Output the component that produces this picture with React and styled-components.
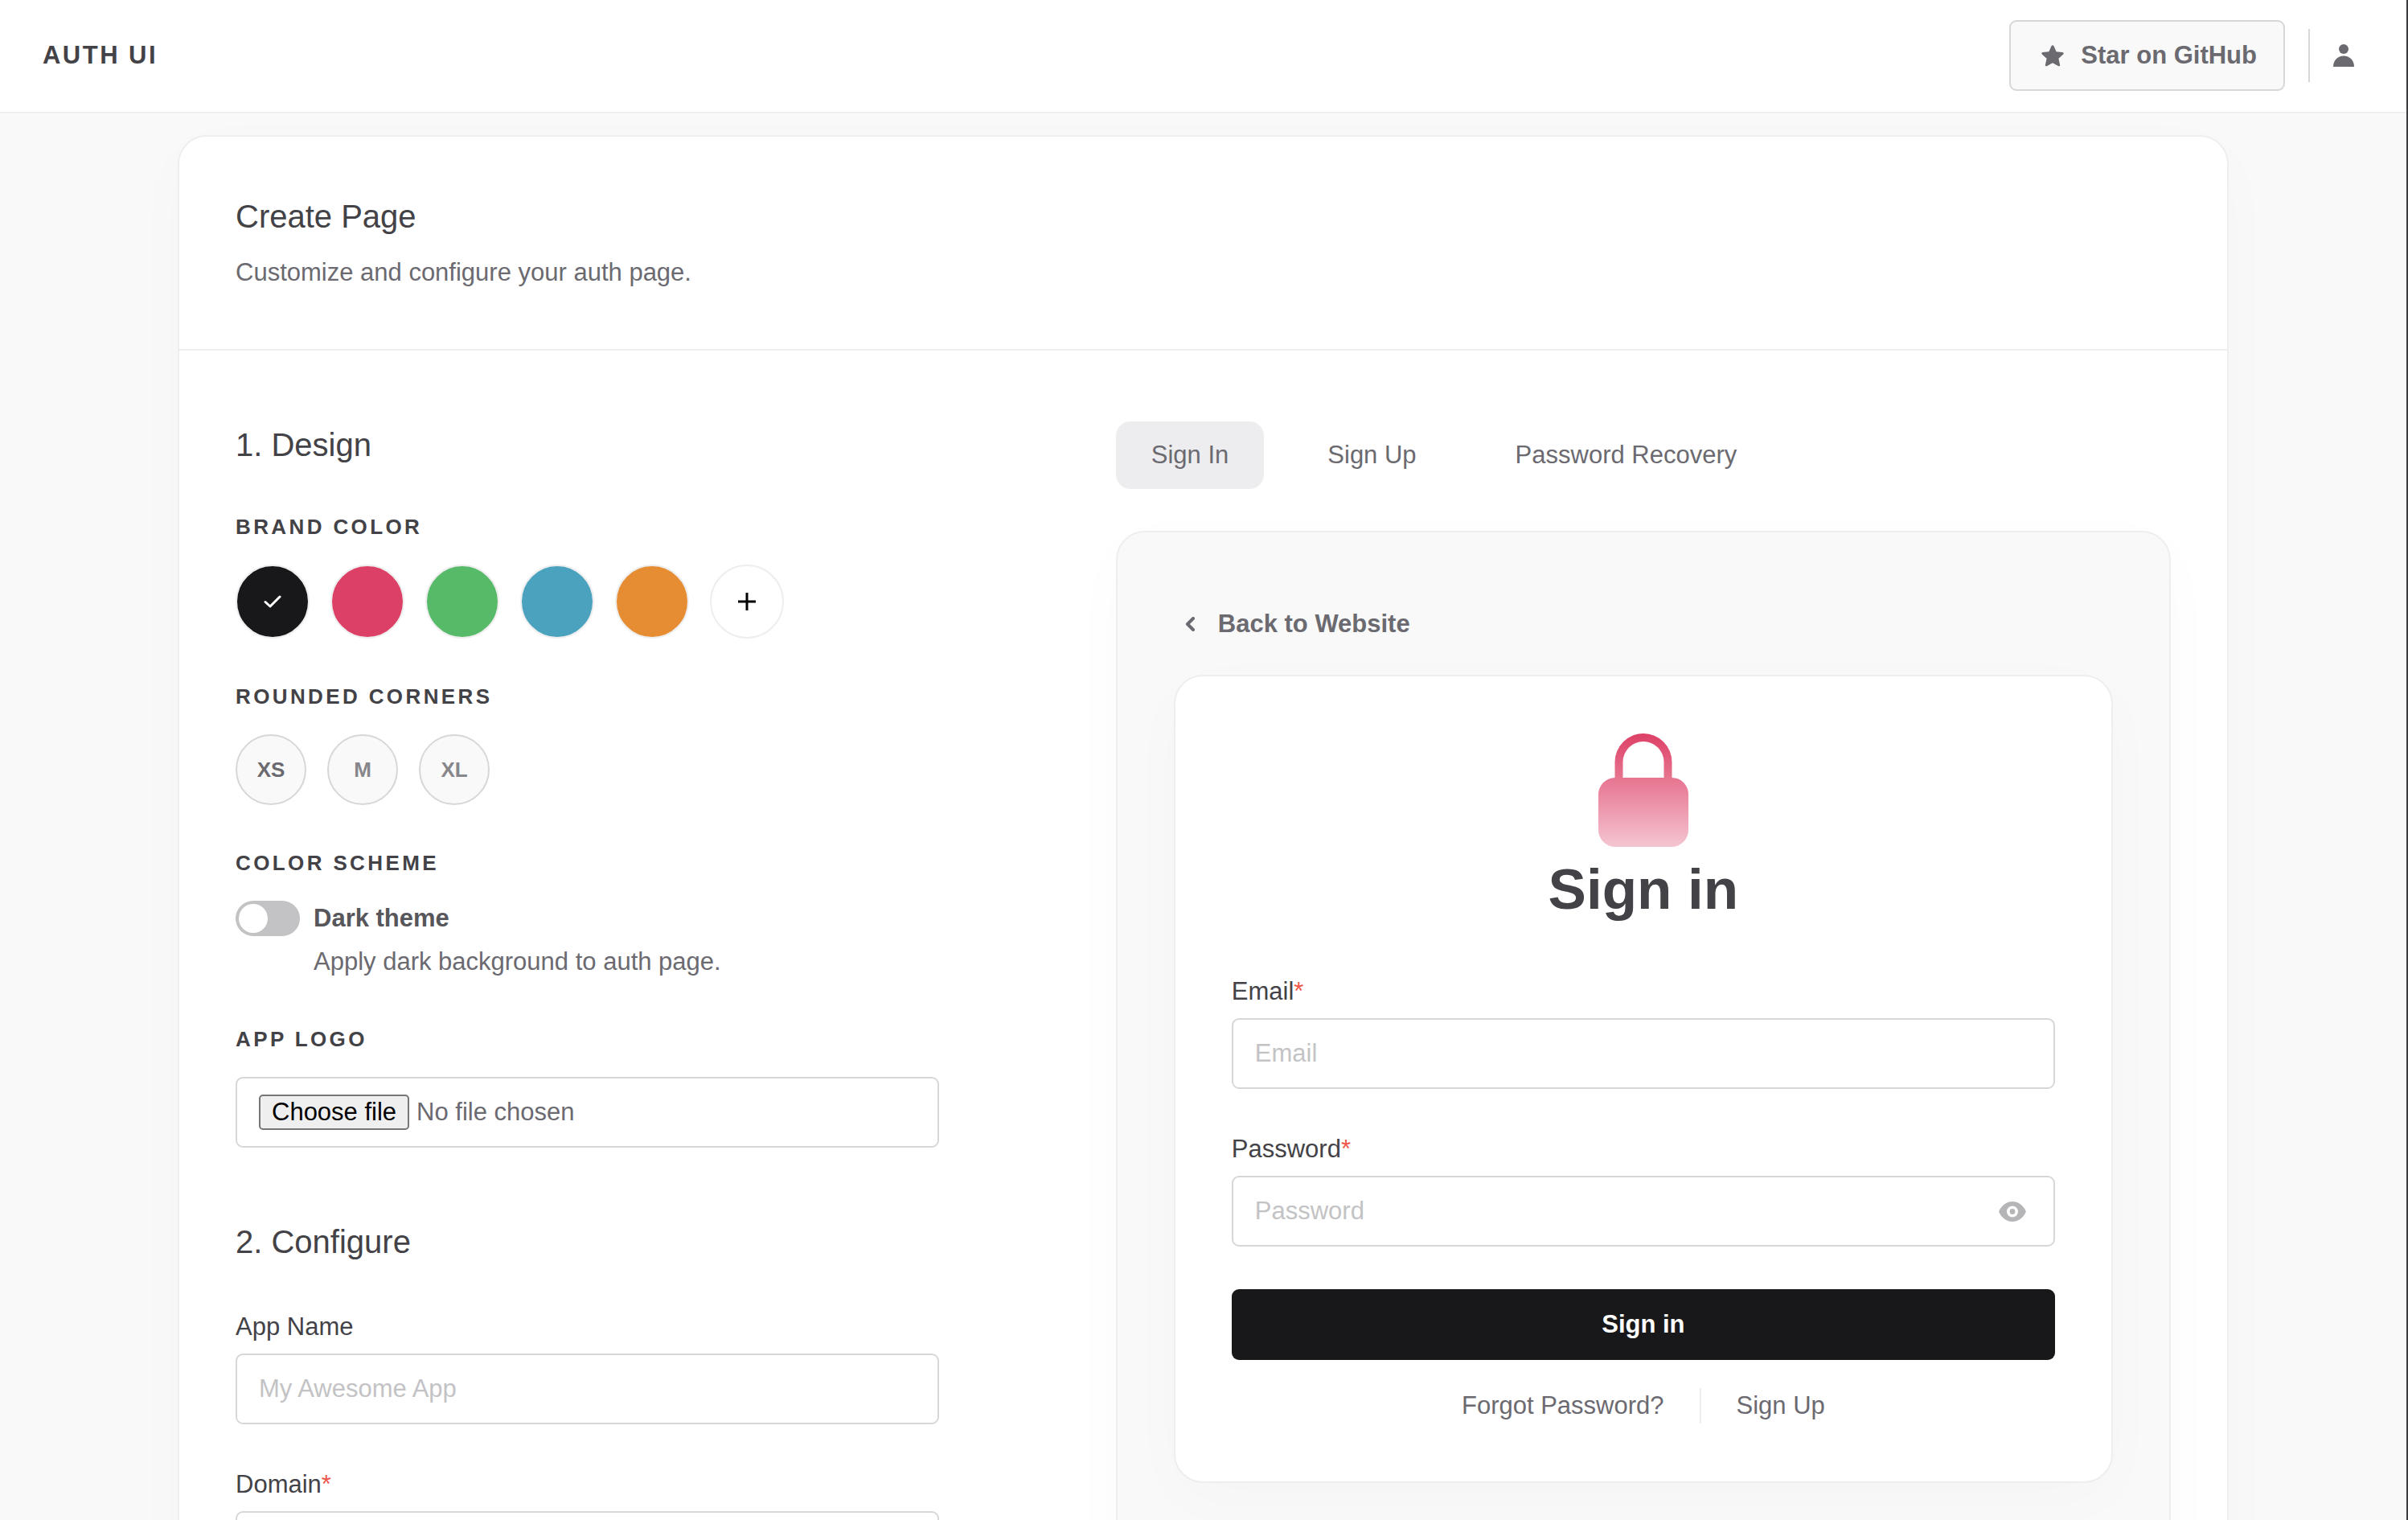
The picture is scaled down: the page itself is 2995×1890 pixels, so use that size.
import React, { useState } from "react";
import styled, { createGlobalStyle } from "styled-components";

const ink = "#434247";
const muted = "#6b6a70";
const hair = "#eeeeee";
const line = "#d7d7d8";

const GlobalStyle = createGlobalStyle`
  *, *::before, *::after { box-sizing: border-box; }
  html { border-right: 2px solid #3b3b3d; scrollbar-width: none; }
  body {
    margin: 0;
    background: #f9f9f9;
    color: ${muted};
    font-family: "Liberation Sans", Arial, Helvetica, sans-serif;
    font-size: 31px;
    line-height: 44px;
  }
  button, input { font: inherit; }
  a { color: inherit; text-decoration: none; }
  h1, h2, h3, p, fieldset { margin: 0; padding: 0; border: 0; font-weight: 400; }
  svg { display: block; }
`;

const Header = styled.header`
  position: relative;
  z-index: 1;
  display: flex;
  align-items: center;
  justify-content: space-between;
  padding: 25px 65px 26px 53px;
  border-bottom: 2px solid ${hair};
  background: #fff;
`;

const Brand = styled.a`
  color: ${ink};
  font-weight: 700;
  letter-spacing: 0.08em;
`;

const HeaderActions = styled.div`
  display: flex;
  align-items: center;
`;

const StarButton = styled.button`
  display: flex;
  align-items: center;
  gap: 21px;
  height: 88px;
  padding: 0 33px 0 38px;
  border: 2px solid ${line};
  border-radius: 9px;
  background: #f9f9f9;
  color: ${muted};
  font-weight: 700;
`;

const HeaderRule = styled.span`
  width: 2px;
  height: 66px;
  margin: 0 29px;
  background: ${line};
`;

const IconButton = styled.button`
  display: flex;
  padding: 0;
  border: 0;
  background: none;
  color: ${({ $tone }) => $tone || muted};
`;

const Main = styled.main`
  padding: 27px 221px 70px;
`;

const Card = styled.section`
  border: 2px solid ${hair};
  border-radius: 36px;
  background: ${({ $fill }) => $fill || "#fff"};
  box-shadow: 0 20px 80px rgba(0, 0, 0, 0.02);
`;

const CardHead = styled.header`
  padding: 75px 70px 73px;
  border-bottom: 2px solid ${hair};
`;

const Title = styled.h1`
  margin-bottom: 24px;
  color: ${ink};
  font-size: 40px;
  line-height: 48px;
`;

const Columns = styled.div`
  display: grid;
  grid-template-columns: 2fr 3fr;
  gap: 220px;
  padding: 88px 70px;
`;

const StepTitle = styled.h2`
  margin-bottom: ${({ $space }) => $space}px;
  padding-top: 5px;
  color: ${ink};
  font-size: 40px;
  line-height: 48px;
`;

const Group = styled.fieldset`
  min-width: 0;
  margin-bottom: ${({ $space }) => $space || 50}px;
`;

const Caption = styled.legend`
  padding: 0;
  margin-bottom: 25px;
  color: ${ink};
  font-size: 26px;
  font-weight: 700;
  line-height: 44px;
  letter-spacing: 0.13em;
  text-transform: uppercase;
`;

const Options = styled.div`
  display: flex;
  gap: 26px;
`;

const Swatch = styled.button`
  display: grid;
  place-items: center;
  width: 92px;
  height: 92px;
  padding: 0;
  border: 2px solid ${hair};
  border-radius: 50%;
  background: ${({ $color }) => $color};
  color: ${({ $mark }) => $mark};
`;

const SizeButton = styled.button`
  width: 88px;
  height: 88px;
  padding: 0;
  border: 2px solid ${line};
  border-radius: 50%;
  background: #f9f9f9;
  color: ${({ $active }) => ($active ? muted : "#87868b")};
  font-size: 26px;
  font-weight: 700;
`;

const SwitchRow = styled.label`
  display: grid;
  grid-template-columns: 80px 1fr;
  align-items: center;
  column-gap: 17px;
  row-gap: 10px;
`;

const Switch = styled.input`
  appearance: none;
  display: flex;
  width: 80px;
  height: 44px;
  margin: 0;
  padding: 4px;
  border-radius: 22px;
  background: #c3c3c5;

  &::before {
    content: "";
    width: 36px;
    height: 36px;
    border-radius: 50%;
    background: #fff;
  }

  &:checked { justify-content: flex-end; background: #18181a; }
`;

const SwitchName = styled.span`
  color: #57565b;
  font-weight: 700;
`;

const SwitchHint = styled.span`
  grid-column: 2;
`;

const FileBox = styled.label`
  position: relative;
  display: flex;
  align-items: center;
  gap: 9px;
  height: 88px;
  padding: 0 27px;
  border: 2px solid ${line};
  border-radius: 9px;
`;

const FileInput = styled.input`
  position: absolute;
  inset: 0;
  width: 100%;
  opacity: 0;
`;

const FileButton = styled.span`
  height: 44px;
  padding: 0 14px;
  border: 2px solid #767676;
  border-radius: 5px;
  background: #efefef;
  color: #000;
  line-height: 40px;
`;

const Field = styled.div`
  margin-bottom: 53px;
`;

const FieldLabel = styled.label`
  display: block;
  margin-bottom: 11px;
  color: ${ink};
`;

const Required = styled.span`
  color: #f0554a;
`;

const InputShell = styled.div`
  display: flex;
  align-items: center;
  height: 88px;
  padding: 0 34px 0 27px;
  border: 2px solid ${line};
  border-radius: 9px;
  background: #fff;
`;

const TextInput = styled.input`
  flex: 1;
  min-width: 0;
  padding: 0;
  border: 0;
  outline: 0;
  background: none;
  color: ${ink};

  &::placeholder { color: #c3c3c5; opacity: 1; }
`;

const Tabs = styled.div`
  display: flex;
  gap: 35px;
  margin-bottom: 52px;
`;

const Tab = styled.button`
  padding: 20px 44px;
  border: 0;
  border-radius: 18px;
  background: ${({ $active }) => ($active ? "#ededef" : "none")};
  color: ${muted};
`;

const Preview = styled(Card)`
  padding: 91px 70px 120px;
`;

const BackLink = styled.a`
  display: inline-flex;
  align-items: center;
  gap: 29px;
  margin-bottom: 41px;
  padding-left: 14px;
  font-weight: 700;
`;

const SignInCard = styled(Card)`
  display: flex;
  flex-direction: column;
  padding: 71px 70px 72px;
`;

const LockArt = styled.svg`
  align-self: center;
`;

const SignInTitle = styled.h2`
  margin: 9px 0 61px;
  color: ${ink};
  font-size: 71px;
  font-weight: 700;
  line-height: 88px;
  text-align: center;
`;

const SubmitButton = styled.button`
  height: 88px;
  margin-bottom: 35px;
  border: 0;
  border-radius: 9px;
  background: #18181a;
  color: #fff;
  font-weight: 700;
`;

const Links = styled.nav`
  display: flex;
  justify-content: center;

  a + a {
    margin-left: 44px;
    padding-left: 44px;
    border-left: 2px solid ${hair};
  }
`;

const StarIcon = () => (
  <svg width="28" height="27" viewBox="0 0 28 27" fill="currentColor" aria-hidden="true">
    <path d="M12.6 1c.5-1.100 2.300-1.100 2.800 0l3.200 7.200 7.800.8c1.300.1 1.800 1.600.8 2.500l-5.800 5.300 1.700 7.800c.3 1.200-1.100 2.100-2.200 1.500L14 22.200l-6.900 3.900c-1.100.6-2.500-.3-2.200-1.500l1.700-7.800L.8 11.500C-.2 10.600.3 9.100 1.600 9l7.800-.8z" />
  </svg>
);

const UserIcon = () => (
  <svg width="26" height="28" viewBox="0 0 26 28" fill="currentColor" aria-hidden="true">
    <circle cx="13" cy="6" r="6" />
    <path d="M0 28C0 20 5.5 14.500 13 14.500S26 20 26 28z" />
  </svg>
);

const CheckIcon = () => (
  <svg width="22" height="16" viewBox="0 0 22 16" fill="none" stroke="currentColor" strokeWidth="3" strokeLinecap="round" strokeLinejoin="round" aria-hidden="true">
    <path d="M2 8.500 8 14 20 2" />
  </svg>
);

const PlusIcon = () => (
  <svg width="22" height="22" viewBox="0 0 22 22" fill="none" stroke="currentColor" strokeWidth="3" aria-hidden="true">
    <path d="M11 0V22M0 11H22" />
  </svg>
);

const ChevronIcon = () => (
  <svg width="12" height="18" viewBox="0 0 12 18" fill="none" stroke="currentColor" strokeWidth="4" strokeLinecap="round" strokeLinejoin="round" aria-hidden="true">
    <path d="M10 2 3 9 10 16" />
  </svg>
);

const EyeIcon = () => (
  <svg width="34" height="25" viewBox="0 0 34 25" fill="currentColor" aria-hidden="true">
    <path fillRule="evenodd" d="M17 0C10 0 4 4.500.6 11.300a2.600 2.600 0 0 0 0 2.400C4 20.500 10 25 17 25s13-4.500 16.400-11.300a2.600 2.600 0 0 0 0-2.400C30 4.500 24 0 17 0zm0 5.500a7 7 0 1 1 0 14 7 7 0 0 1 0-14z" />
    <circle cx="17" cy="12.500" r="3.400" />
  </svg>
);

const Lock = () => (
  <LockArt width="112" height="141" viewBox="0 0 112 141" aria-hidden="true">
    <defs>
      <linearGradient id="lockFill" x1="0" y1="0" x2="0" y2="141" gradientUnits="userSpaceOnUse">
        <stop offset="0" stopColor="#dd4066" />
        <stop offset="1" stopColor="#f5c5d1" />
      </linearGradient>
    </defs>
    <path
      fill="url(#lockFill)"
      fillRule="evenodd"
      d="M20.500 55V35.500a35.500 35.500 0 0 1 71 0V55A20.500 20.500 0 0 1 112 76v44a21 21 0 0 1-21 21H21a21 21 0 0 1-21-21V76A21 21 0 0 1 20.500 55ZM30.500 55h51V35.500a25.500 25.500 0 0 0-51 0Z"
    />
  </LockArt>
);

const colors = [
  { name: "Black", value: "#18181a" },
  { name: "Red", value: "#dd4066" },
  { name: "Green", value: "#56ba68" },
  { name: "Blue", value: "#4aa2bf" },
  { name: "Orange", value: "#e68d33" },
];

function TextField({ id, label, required, children, ...input }) {
  return (
    <Field>
      <FieldLabel htmlFor={id}>
        {label}
        {required && <Required>*</Required>}
      </FieldLabel>
      <InputShell>
        <TextInput id={id} {...input} />
        {children}
      </InputShell>
    </Field>
  );
}

export default function App() {
  const [color, setColor] = useState("Black");
  const [tab, setTab] = useState("Sign In");
  const [radius, setRadius] = useState("XS");

  return (
    <>
      <GlobalStyle />
      <Header>
        <Brand href="#">AUTH UI</Brand>
        <HeaderActions>
          <StarButton type="button">
            <StarIcon />
            Star on GitHub
          </StarButton>
          <HeaderRule />
          <IconButton type="button" aria-label="Account">
            <UserIcon />
          </IconButton>
        </HeaderActions>
      </Header>

      <Main>
        <Card>
          <CardHead>
            <Title>Create Page</Title>
            <p>Customize and configure your auth page.</p>
          </CardHead>

          <Columns>
            <div>
              <StepTitle $space={56}>1. Design</StepTitle>

              <Group>
                <Caption>Brand color</Caption>
                <Options>
                  {colors.map(({ name, value }) => (
                    <Swatch key={name} type="button" aria-label={name} $color={value} $mark="#fff" onClick={() => setColor(name)}>
                      {color === name && <CheckIcon />}
                    </Swatch>
                  ))}
                  <Swatch type="button" aria-label="Add color" $color="#fff" $mark="#000">
                    <PlusIcon />
                  </Swatch>
                </Options>
              </Group>

              <Group>
                <Caption>Rounded corners</Caption>
                <Options>
                  {["XS", "M", "XL"].map((size) => (
                    <SizeButton key={size} type="button" $active={radius === size} onClick={() => setRadius(size)}>
                      {size}
                    </SizeButton>
                  ))}
                </Options>
              </Group>

              <Group $space={52}>
                <Caption>Color scheme</Caption>
                <SwitchRow>
                  <Switch type="checkbox" role="switch" />
                  <SwitchName>Dark theme</SwitchName>
                  <SwitchHint>Apply dark background to auth page.</SwitchHint>
                </SwitchRow>
              </Group>

              <Group $space={88}>
                <Caption>App logo</Caption>
                <FileBox>
                  <FileInput type="file" />
                  <FileButton>Choose file</FileButton>
                  No file chosen
                </FileBox>
              </Group>

              <StepTitle $space={60}>2. Configure</StepTitle>
              <TextField id="app-name" label="App Name" placeholder="My Awesome App" />
              <TextField id="domain" label="Domain" required />
            </div>

            <div>
              <Tabs>
                {["Sign In", "Sign Up", "Password Recovery"].map((name) => (
                  <Tab key={name} type="button" $active={tab === name} onClick={() => setTab(name)}>
                    {name}
                  </Tab>
                ))}
              </Tabs>

              <Preview $fill="#f9f9f9">
                <BackLink href="#">
                  <ChevronIcon />
                  Back to Website
                </BackLink>

                <SignInCard>
                  <Lock />
                  <SignInTitle>Sign in</SignInTitle>
                  <TextField id="email" type="email" label="Email" required placeholder="Email" />
                  <TextField id="password" type="password" label="Password" required placeholder="Password">
                    <IconButton type="button" aria-label="Show password" $tone="#b5b4b7">
                      <EyeIcon />
                    </IconButton>
                  </TextField>
                  <SubmitButton type="button">Sign in</SubmitButton>
                  <Links>
                    <a href="#">Forgot Password?</a>
                    <a href="#">Sign Up</a>
                  </Links>
                </SignInCard>
              </Preview>
            </div>
          </Columns>
        </Card>
      </Main>
    </>
  );
}
